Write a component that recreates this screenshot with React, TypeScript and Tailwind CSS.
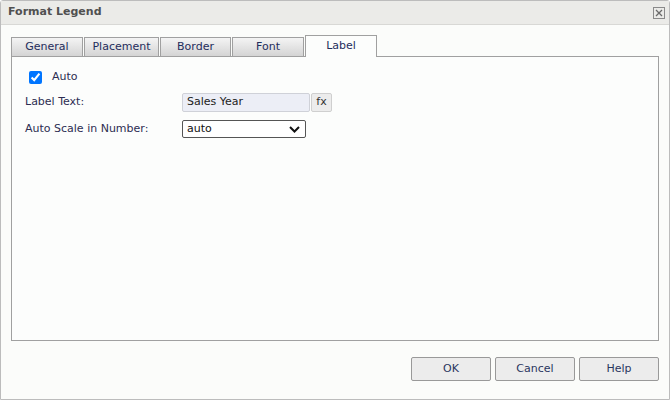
import React from 'react';

const tabs = [
  { name: 'General', w: 'w-[72px]' },
  { name: 'Placement', w: 'w-[75px]' },
  { name: 'Border', w: 'w-[71px]' },
  { name: 'Font', w: 'w-[72px]' },
];

const App: React.FC = () => {
  return (
    <div
      className="w-[670px] h-[400px] bg-[#fbfcfa] border border-[#bcbcbc] rounded-t-[3px] flex flex-col text-[11px] text-[#2d2d52]"
      style={{ fontFamily: '"DejaVu Sans", Tahoma, sans-serif' }}
    >
      {/* title bar */}
      <div className="h-[24px] shrink-0 bg-[#ebebe8] border-b border-[#d8d8d5] flex items-center justify-between pl-[7px] pr-[4px]">
        <span className="font-bold text-[#505050] text-[11px]">Format Legend</span>
        <div className="w-[12px] h-[12px] border border-[#8a8a8a] flex items-center justify-center">
          <svg width="8" height="8" viewBox="0 0 8 8">
            <path d="M1 1L7 7M7 1L1 7" stroke="#6a6a6a" strokeWidth="1.3" />
          </svg>
        </div>
      </div>

      <div className="pl-[10px] pt-[10px] flex flex-col">
        {/* tabs */}
        <div className="flex items-end gap-[1px] h-[22px] relative z-10 -mb-px">
          {tabs.map(t => (
            <div
              key={t.name}
              className={`${t.w} h-[19px] border border-b-0 border-[#a0a0a0] bg-gradient-to-b from-[#f4f4f4] to-[#d4d4d4] flex items-center justify-center text-[#1f2d5c] mb-px`}
            >
              {t.name}
            </div>
          ))}
          <div className="w-[72px] h-[22px] border border-b-0 border-[#a0a0a0] bg-[#fcfdfc] flex items-center justify-center text-[#1f2d5c]">
            Label
          </div>
        </div>

        {/* panel */}
        <div className="w-[648px] h-[285px] border border-[#a0a0a0] bg-[#fcfdfc] pl-[13px] pt-[14px] flex flex-col">
          <label className="flex items-center h-[13px] pl-[4px] gap-[10px]">
            <input type="checkbox" defaultChecked className="w-[13px] h-[13px] accent-[#0075ff]" />
            <span>Auto</span>
          </label>

          <div className="flex items-center mt-[9px] h-[19px]">
            <span className="w-[157px]">Label Text:</span>
            <div className="w-[128px] h-[19px] bg-[#eceef6] border border-[#cfd1d8] rounded-[2px] flex items-center pl-[4px] text-[#222]">
              Sales Year
            </div>
            <div className="w-[21px] h-[19px] bg-[#ececec] border border-[#cfcfcf] rounded-[2px] flex items-center justify-center text-[#333] ml-px">
              fx
            </div>
          </div>

          <div className="flex items-center mt-[8px] h-[18px]">
            <span className="w-[157px]">Auto Scale in Number:</span>
            <div className="w-[124px] h-[18px] border border-[#555] rounded-[2px] bg-white flex items-center justify-between pl-[4px] pr-[5px] text-[#111]">
              <span>auto</span>
              <svg width="11" height="7" viewBox="0 0 11 7">
                <path d="M1 1L5.5 5.5L10 1" stroke="#111" strokeWidth="2" fill="none" />
              </svg>
            </div>
          </div>
        </div>

        {/* buttons */}
        <div className="w-[648px] flex justify-end gap-[4px] mt-[16px]">
          {['OK', 'Cancel', 'Help'].map(b => (
            <button
              key={b}
              className="w-[80px] h-[24px] bg-[#ececec] border border-[#999] rounded-[2px] text-[#2a3660] text-[11px]"
            >
              {b}
            </button>
          ))}
        </div>
      </div>
    </div>
  );
};

export default App;
